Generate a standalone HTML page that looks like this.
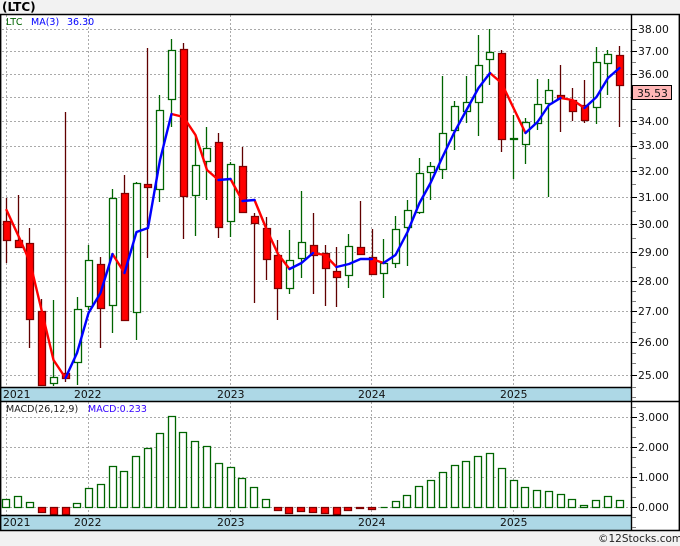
<!DOCTYPE html>
<html><head><meta charset="utf-8"><title>LTC</title>
<style>html,body{margin:0;padding:0;background:#f2f2f2}svg{display:block}text{font-family:"DejaVu Sans","Liberation Sans",sans-serif}</style></head>
<body>
<svg width="680" height="546" viewBox="0 0 680 546" xmlns="http://www.w3.org/2000/svg">
<rect width="680" height="546" fill="#f2f2f2"/>
<rect x="0" y="14" width="680" height="516" fill="#fff"/>
<!-- date bands -->
<rect x="1" y="388" width="631" height="13" fill="#add8e6"/>
<rect x="1" y="516" width="631" height="14" fill="#add8e6"/>
<!-- grid -->
<g shape-rendering="crispEdges" stroke="#aaaaaa" stroke-dasharray="2 2" fill="none">
<path d="M2 29.5H632M2 51.5H632M2 74.5H632M2 97.5H632M2 121.5H632M2 146.5H632M2 171.5H632M2 197.5H632M2 224.5H632M2 252.5H632M2 281.5H632M2 311.5H632M2 342.5H632M2 375.5H632"/>
<path d="M2 417.5H632M2 447.5H632M2 477.5H632M2 507.5H632"/>
<path d="M6.5 15V388M88.5 15V388M230.5 15V388M371.5 15V388M513.5 15V388"/>
<path d="M6.5 402V516M88.5 402V516M230.5 402V516M371.5 402V516M513.5 402V516"/>
</g>
<!-- wicks -->
<g fill="none" stroke-width="1.3">
<path stroke="#600000" d="M6.5 198V263M18.5 195V248M29.5 228V348M41.5 299V386M65.5 112V382M100.5 257V348M124.5 175V320M147.5 48V258M183.5 43V239M218.5 133V238M242.5 147V213M254.5 213V303M266.5 217V280M277.5 240V320M313.5 213V294M325.5 245V306M336.5 247V307M360.5 201V255M372.5 229V274M501.5 50V152M560.5 65V132M572.5 88V121M584.5 80V123M619.5 46V127"/>
<path stroke="#006400" d="M53.5 300V386M77.5 297V385M88.5 245V310M112.5 189V333M136.5 182V340M159.5 95V202M171.5 39V127M195.5 135V236M206.5 127V200M230.5 162V237M289.5 230V294M301.5 191V278M348.5 234V288M383.5 239V298M395.5 216V268M407.5 200V266M419.5 158V214M430.5 162V200M442.5 76V179M454.5 101V150M466.5 76V123M478.5 35V136M489.5 29V85M513.5 115V179M525.5 118V164M537.5 79V130M548.5 79V197M596.5 47V124M607.5 50V95"/>
<!-- bodies -->
<path fill="#fff" stroke="#006400" d="M50.5 377.5h7v6h-7zM74.5 309.5h7v53h-7zM85.5 260.5h7v46h-7zM109.5 198.5h7v107h-7zM133.5 183.5h7v129h-7zM156.5 110.5h7v79h-7zM168.5 50.5h7v49h-7zM192.5 165.5h7v30h-7zM203.5 148.5h7v13h-7zM227.5 164.5h7v57h-7zM286.5 260.5h7v28h-7zM298.5 242.5h7v16h-7zM345.5 246.5h7v29h-7zM380.5 263.5h7v10h-7zM392.5 229.5h7v34h-7zM404.5 210.5h7v17h-7zM416.5 173.5h7v39h-7zM427.5 166.5h7v6h-7zM439.5 133.5h7v36h-7zM451.5 106.5h7v24h-7zM463.5 102.5h7v9h-7zM475.5 65.5h7v37h-7zM486.5 52.5h7v7h-7zM510.5 138.5h7v1h-7zM522.5 122.5h7v22h-7zM534.5 104.5h7v19h-7zM545.5 90.5h7v13h-7zM593.5 62.5h7v45h-7zM604.5 54.5h7v9h-7z"/>
<path fill="#f00" stroke="#800000" d="M3.5 221.5h7v19h-7zM15.5 240.5h7v7h-7zM26.5 243.5h7v76h-7zM38.5 311.5h7v74h-7zM62.5 373.5h7v5h-7zM97.5 264.5h7v44h-7zM121.5 193.5h7v127h-7zM144.5 184.5h7v3h-7zM180.5 49.5h7v147h-7zM215.5 142.5h7v85h-7zM239.5 166.5h7v46h-7zM251.5 216.5h7v7h-7zM263.5 228.5h7v31h-7zM274.5 255.5h7v33h-7zM310.5 245.5h7v10h-7zM322.5 253.5h7v15h-7zM333.5 271.5h7v6h-7zM357.5 247.5h7v7h-7zM369.5 257.5h7v17h-7zM498.5 53.5h7v86h-7zM557.5 95.5h7v3h-7zM569.5 100.5h7v11h-7zM581.5 105.5h7v15h-7zM616.5 55.5h7v30h-7z"/>
<!-- MACD -->
<path fill="#fff" stroke="#006400" d="M2.5 499.5h7V507.5h-7zM14.5 496.5h7V507.5h-7zM26.5 502.5h7V507.5h-7zM73.5 503.5h7V507.5h-7zM85.5 488.5h7V507.5h-7zM97.5 484.5h7V507.5h-7zM109.5 466.5h7V507.5h-7zM120.5 471.5h7V507.5h-7zM132.5 456.5h7V507.5h-7zM144.5 448.5h7V507.5h-7zM156.5 433.5h7V507.5h-7zM168.5 416.5h7V507.5h-7zM179.5 432.5h7V507.5h-7zM191.5 441.5h7V507.5h-7zM203.5 446.5h7V507.5h-7zM215.5 463.5h7V507.5h-7zM227.5 467.5h7V507.5h-7zM238.5 478.5h7V507.5h-7zM250.5 487.5h7V507.5h-7zM262.5 499.5h7V507.5h-7zM380.5 507.5h7M392.5 501.5h7V507.5h-7zM403.5 495.5h7V507.5h-7zM415.5 486.5h7V507.5h-7zM427.5 480.5h7V507.5h-7zM439.5 472.5h7V507.5h-7zM451.5 465.5h7V507.5h-7zM462.5 461.5h7V507.5h-7zM474.5 456.5h7V507.5h-7zM486.5 453.5h7V507.5h-7zM498.5 468.5h7V507.5h-7zM510.5 480.5h7V507.5h-7zM521.5 487.5h7V507.5h-7zM533.5 490.5h7V507.5h-7zM545.5 491.5h7V507.5h-7zM557.5 494.5h7V507.5h-7zM568.5 499.5h7V507.5h-7zM580.5 505.5h7V507.5h-7zM592.5 500.5h7V507.5h-7zM604.5 496.5h7V507.5h-7zM616.5 500.5h7V507.5h-7z"/>
<path fill="#f00" stroke="#800000" d="M38.5 507.5h7v5h-7zM50.5 507.5h7v7h-7zM62.5 507.5h7v7h-7zM274.5 507.5h7v3h-7zM285.5 507.5h7v6h-7zM297.5 507.5h7v4h-7zM309.5 507.5h7v5h-7zM321.5 507.5h7v6h-7zM333.5 507.5h7v7h-7zM344.5 507.5h7v3h-7zM356.5 507.5h7v1h-7zM368.5 507.5h7v2h-7z"/>
</g>
<!-- moving average -->
<g fill="none" stroke-width="2.4" stroke-linejoin="round" stroke-linecap="round">
<g stroke="#f00">
<polyline points="6.5,210 18,235 30,262 42,312 53.5,360 65.5,378"/>
<polyline points="112.5,254 124.5,273"/>
<polyline points="171.5,114 183.5,117 195.5,135 207,170 218.5,180"/>
<polyline points="230.5,179 242.5,201"/>
<polyline points="254.5,200 266,228 278,254 289.5,269"/>
<polyline points="313,253 325,255 336.5,267"/>
<polyline points="372,259 383.5,263"/>
<polyline points="490,73 501.5,83 513.5,108 525.5,133"/>
<polyline points="560.5,98 572.5,100 584.5,108"/>
</g>
<g stroke="#00f">
<polyline points="65.5,378 77,353 88.5,313 100.5,293 112.5,254"/>
<polyline points="124.5,273 136.5,232 148,228 160,160 171.5,114"/>
<polyline points="218.5,180 230.5,179"/>
<polyline points="242.5,201 254.5,200"/>
<polyline points="289.5,269 301.5,263 313,253"/>
<polyline points="336.5,267 349,264 360.5,259 372,259"/>
<polyline points="383.5,263 395.5,255 407.5,232 419.5,203 430.5,183 442.5,157 454.5,132 466.5,110 478.5,88 490,73"/>
<polyline points="525.5,133 537.5,122 549,105 560.5,98"/>
<polyline points="584.5,108 596.5,97 608,78 619.5,68"/>
</g>
</g>
<!-- frame -->
<g fill="none">
<path stroke="#000" stroke-width="1.4" d="M0 14.5H680M0 401.5H680M0 530.5H680M0.7 14V531M679.3 14V531M631.5 14V531M1 387.5H632M1 515.5H632"/>
<path stroke="#000" shape-rendering="crispEdges" d="M632 29.5h5M632 51.5h5M632 74.5h5M632 97.5h5M632 121.5h5M632 146.5h5M632 171.5h5M632 197.5h5M632 224.5h5M632 252.5h5M632 281.5h5M632 311.5h5M632 342.5h5M632 375.5h5M632 417.5h5M632 447.5h5M632 477.5h5M632 507.5h5"/>
<path stroke="#808080" shape-rendering="crispEdges" d="M632 40.5h4M632 62.5h4M632 85.5h4M632 109.5h4M632 133.5h4M632 158.5h4M632 184.5h4M632 211.5h4M632 238.5h4M632 267.5h4M632 291.5h4M632 301.5h4M632 322.5h4M632 332.5h4M632 353.5h4M632 363.5h4M632 387.5h4M632 397.5h4M632 407.5h4M632 427.5h4M632 437.5h4M632 457.5h4M632 467.5h4M632 487.5h4M632 497.5h4M632 517.5h4M632 527.5h4"/>
</g>
<!-- axis labels -->
<g font-size="10.8" fill="#111">
<text x="638" y="33">38.00</text><text x="638" y="55">37.00</text><text x="638" y="78">36.00</text>
<text x="638" y="125">34.00</text><text x="638" y="149">33.00</text><text x="638" y="175">32.00</text>
<text x="638" y="201">31.00</text><text x="638" y="228">30.00</text><text x="638" y="256">29.00</text>
<text x="638" y="285">28.00</text><text x="638" y="315">27.00</text><text x="638" y="346">26.00</text>
<text x="638" y="379">25.00</text>
<text x="638" y="421">3.000</text><text x="638" y="451">2.000</text><text x="638" y="481">1.000</text><text x="638" y="511">0.000</text>
<text x="3" y="398">2021</text><text x="74" y="398">2022</text><text x="217" y="398">2023</text><text x="358" y="398">2024</text><text x="500" y="398">2025</text>
<text x="3" y="526">2021</text><text x="74" y="526">2022</text><text x="217" y="526">2023</text><text x="358" y="526">2024</text><text x="500" y="526">2025</text>
</g>
<rect x="632.5" y="85.5" width="39" height="14" fill="#ffb6b6" stroke="#000" shape-rendering="crispEdges"/>
<text x="637" y="97" font-size="10.8" fill="#111">35.53</text>
<text x="2" y="11" font-size="12" font-weight="bold" fill="#000">(LTC)</text>
<g font-size="9.5">
<text x="6" y="25" fill="#006400" letter-spacing=".3">LTC</text>
<text x="31" y="25" fill="#0000ff">MA(3)</text>
<text x="67" y="25" fill="#0000ff">36.30</text>
<text x="6" y="412" fill="#222">MACD(26,12,9)</text>
<text x="88" y="412" fill="#3300ff">MACD:0.233</text>
</g>
<text x="598" y="542" font-size="10.5" fill="#222">©12Stocks.com</text>
</svg>
</body></html>
